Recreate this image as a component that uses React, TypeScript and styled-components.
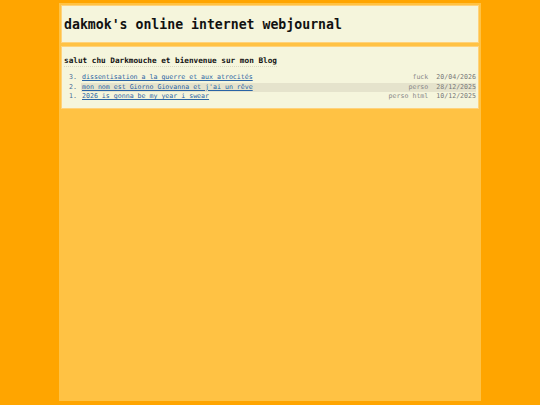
import * as React from 'react';
import styled, { createGlobalStyle } from 'styled-components';

const GlobalStyle = createGlobalStyle`
  html, body {
    margin: 0;
    padding: 0;
    background: #ffa500;
  }
  body {
    font-family: 'DejaVu Sans Mono', monospace;
  }
`;

const Page = styled.div`
  box-sizing: border-box;
  width: 422px;
  min-height: 398px;
  margin: 3px auto 0;
  padding: 2px;
  background: #ffc244;
  display: flex;
  flex-direction: column;
  gap: 3px;
`;

const Panel = styled.div`
  box-sizing: border-box;
  background: #f5f5dc;
  border: 1px solid #ffd27a;
`;

const Header = styled(Panel)`
  height: 38px;
  display: flex;
  align-items: center;
  padding: 0 2px;
`;

const Title = styled.h1`
  margin: 0;
  font-size: 13.2px;
  font-weight: bold;
  color: #111;
`;

const Content = styled(Panel)`
  padding: 1px 2px 6px;
`;

const Intro = styled.h2`
  display: inline-block;
  margin: 0 0 6px;
  font-size: 7.7px;
  line-height: 11px;
  font-weight: bold;
  color: #111;
  border-bottom: 1px dotted #d8d6c0;
`;

const List = styled.ol`
  margin: 0;
  padding: 0 0 0 17px;
  font-size: 6.6px;
  line-height: 9.5px;
  color: #4a6c96;
`;

const Item = styled.li<{ $alt?: boolean }>`
  background: ${(p) => (p.$alt ? '#e5e3cc' : 'transparent')};
  padding-left: 1px;
`;

const Row = styled.div`
  display: flex;
  align-items: baseline;
`;

const PostLink = styled.a`
  flex: 1;
  color: #2a64a4;
  text-decoration: underline;
`;

const Tags = styled.span`
  color: #888;
  margin-right: 8px;
`;

const DateText = styled.span`
  color: #777;
`;

const posts = [
  { n: 3, title: 'dissentisation a la guerre et aux atrocités', tags: 'fuck', date: '20/04/2026' },
  { n: 2, title: "mon nom est Giorno Giovanna et j'ai un rêve", tags: 'perso', date: '28/12/2025' },
  { n: 1, title: '2026 is gonna be my year i swear', tags: 'perso html', date: '10/12/2025' },
];

const App = () => (
  <>
    <GlobalStyle />
    <Page>
      <Header>
        <Title>dakmok's online internet webjournal</Title>
      </Header>
      <Content>
        <Intro>salut chu Darkmouche et bienvenue sur mon Blog</Intro>
        <List reversed>
          {posts.map((p, i) => (
            <Item key={p.n} value={p.n} $alt={i === 1}>
              <Row>
                <PostLink href="#">{p.title}</PostLink>
                <Tags>{p.tags}</Tags>
                <DateText>{p.date}</DateText>
              </Row>
            </Item>
          ))}
        </List>
      </Content>
    </Page>
  </>
);

export default App;
